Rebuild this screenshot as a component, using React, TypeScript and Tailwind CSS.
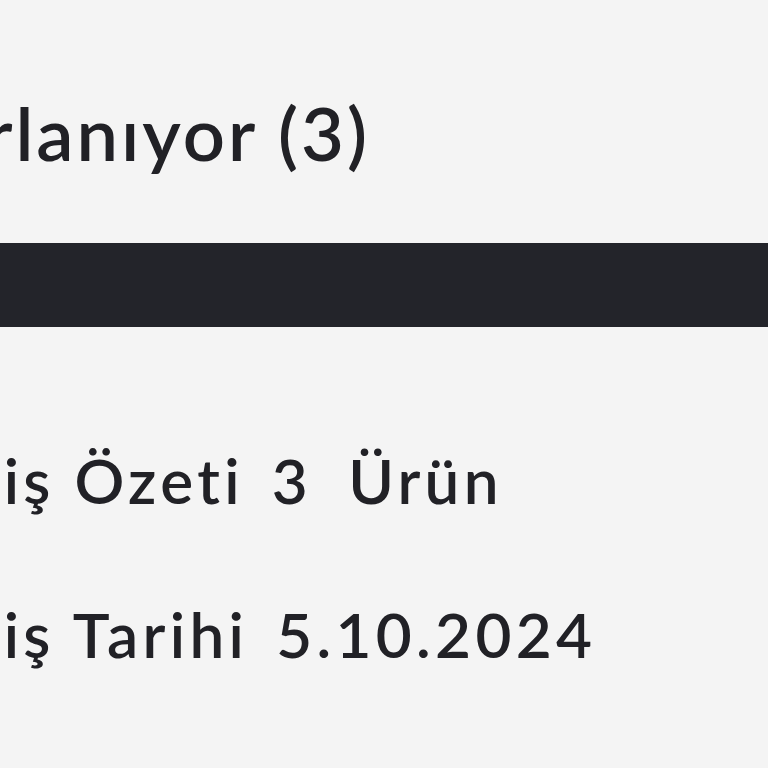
export default function App() {
  const rows = [
    { label: "Sipariş Özeti", value: ["3", "Ürün"] },
    { label: "Sipariş Tarihi", value: ["5.10.2024"] },
  ];

  return (
    <div className="min-h-screen overflow-hidden bg-[#f4f4f4] text-[#212126] font-['Lato','Noto_Sans',sans-serif]">
      {/* başlık: soldan kırpılmış */}
      <div className="h-[243px] pt-[96px]">
        <div className="flex w-[370px] justify-end">
          <h2 className="whitespace-nowrap text-[74px] leading-none font-semibold tracking-[0.04em]">Hazırlanıyor (3)</h2>
        </div>
      </div>

      {/* koyu şerit */}
      <div className="h-[84px] bg-[#23242a]" />

      {/* sipariş bilgileri */}
      <div className="flex flex-col gap-[92px] pt-[122px] -ml-[156px]">
        {rows.map((row) => (
          <div key={row.label} className="flex items-baseline gap-[28px] whitespace-nowrap text-[62px] leading-none font-semibold tracking-[0.07em]">
            <span>{row.label}</span>
            <span className="flex gap-[36px]">
              {row.value.map((v) => (
                <span key={v}>{v}</span>
              ))}
            </span>
          </div>
        ))}
      </div>
    </div>
  );
}
